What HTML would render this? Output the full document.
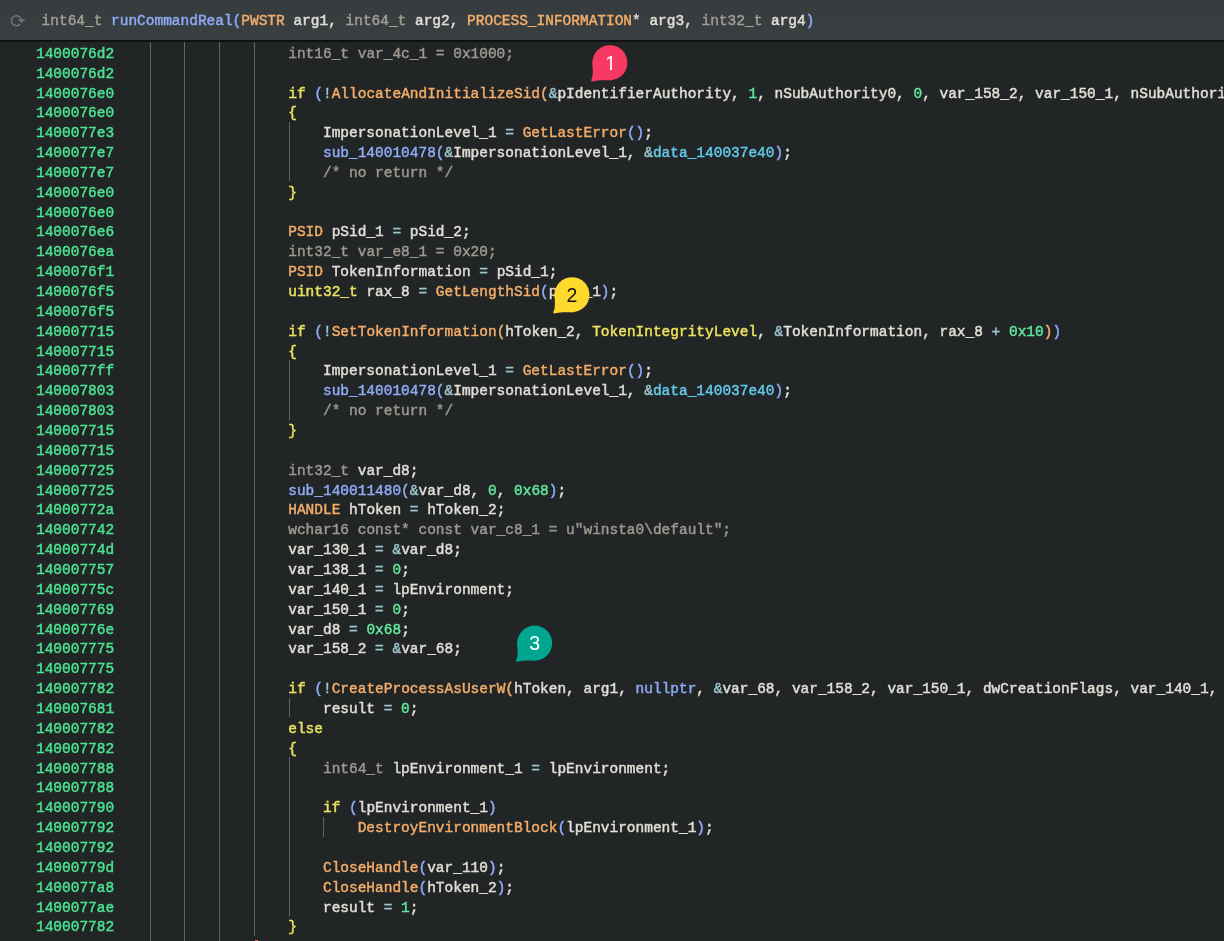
<!DOCTYPE html>
<html lang="en">
<head>
<meta charset="utf-8">
<title>runCommandReal</title>
<style>
html,body{margin:0;padding:0;}
body{width:1224px;height:941px;overflow:hidden;background:#222526;position:relative;
 font-family:"Liberation Mono", monospace;font-size:14.47px;color:#e2ded6;-webkit-text-stroke:0.45px;}
.hdr{position:absolute;left:0;top:0;width:1224px;height:40px;background:linear-gradient(#363c3e,#3a4042);z-index:3;will-change:transform;}
.hline{position:absolute;left:0;top:39.6px;width:1224px;height:2.2px;background:#0e1011;z-index:3;}
.hdr .sig{position:absolute;left:41.6px;top:10.9px;height:20px;line-height:20px;white-space:pre;}
.hdr svg{position:absolute;left:8px;top:12px;}
.code{will-change:transform;position:absolute;left:0;top:42px;width:1224px;height:899px;overflow:hidden;}
.r{position:absolute;left:0;width:1224px;height:19.855px;line-height:19.855px;white-space:pre;}
.a{position:absolute;left:36.0px;top:2.4px;color:#4ae391;}
.c{position:absolute;left:149.3px;top:2.4px;}
.gl{position:absolute;width:1px;background:#606466;}
.d{color:#9e988f;}
.k{color:#ede25d;}
.f{color:#f3ad69;}
.t{color:#f3ad69;}
.s{color:#8fabf6;}
.p{color:#8fabf6;}
.o{color:#9cc6cf;}
.n{color:#5fe79b;}
.g{color:#62c9ea;}
.v{color:#e2ded6;}
.hd{color:#a39d94;}
.bub{position:absolute;z-index:5;}
.bub text{font-family:"Liberation Sans",sans-serif;}
</style>
</head>
<body>
<div class="hdr"><svg width="20" height="18" viewBox="8 12 20 18"><path d="M20.23 24.0A5 5 0 1 1 21.4 20.0" fill="none" stroke="#707475" stroke-width="1.5"/><path d="M17.9 19.5L25.4 19.1L21.7 22.9Z" fill="#707475"/></svg><div class="sig"><span class="hd">int64_t</span><span class="v"> </span><span class="s">runCommandReal(</span><span class="t">PWSTR</span><span class="v"> arg1, </span><span class="hd">int64_t</span><span class="v"> arg2, </span><span class="t">PROCESS_INFORMATION</span><span class="v">* arg3, </span><span class="hd">int32_t</span><span class="v"> arg4</span><span class="s">)</span></div></div>
<div class="hline"></div>
<div class="code">
<div class="gl" style="left:149.70px;top:0.40px;height:913.33px"></div>
<div class="gl" style="left:184.44px;top:0.40px;height:913.33px"></div>
<div class="gl" style="left:219.18px;top:0.40px;height:913.33px"></div>
<div class="gl" style="left:253.92px;top:0.40px;height:893.48px"></div>
<div class="gl" style="left:288.66px;top:79.82px;height:59.56px"></div>
<div class="gl" style="left:288.66px;top:318.08px;height:59.56px"></div>
<div class="gl" style="left:288.66px;top:655.62px;height:19.86px"></div>
<div class="gl" style="left:288.66px;top:715.18px;height:158.84px"></div>
<div class="gl" style="left:323.40px;top:774.75px;height:19.86px"></div>
<div class="r" style="top:0.400px"><span class="a">1400076d2</span><span class="c">                <span class="d">int16_t var_4c_1 = 0x1000;</span></span></div>
<div class="r" style="top:20.255px"><span class="a">1400076d2</span></div>
<div class="r" style="top:40.110px"><span class="a">1400076e0</span><span class="c">                <span class="k">if</span><span class="v"> </span><span class="p">(</span><span class="o">!</span><span class="f">AllocateAndInitializeSid(</span><span class="o">&amp;</span><span class="v">pIdentifierAuthority, </span><span class="n">1</span><span class="v">, nSubAuthority0, </span><span class="n">0</span><span class="v">, var_158_2, var_150_1, nSubAuthority3, nSubAuthority4, nSubAuthority5</span></span></div>
<div class="r" style="top:59.965px"><span class="a">1400076e0</span><span class="c">                <span class="k">{</span></span></div>
<div class="r" style="top:79.820px"><span class="a">1400077e3</span><span class="c">                    <span class="v">ImpersonationLevel_1 </span><span class="o">=</span><span class="v"> </span><span class="f">GetLastError</span><span class="p">()</span><span class="v">;</span></span></div>
<div class="r" style="top:99.675px"><span class="a">1400077e7</span><span class="c">                    <span class="s">sub_140010478</span><span class="p">(</span><span class="o">&amp;</span><span class="v">ImpersonationLevel_1, </span><span class="o">&amp;</span><span class="g">data_140037e40</span><span class="p">)</span><span class="v">;</span></span></div>
<div class="r" style="top:119.530px"><span class="a">1400077e7</span><span class="c">                    <span class="d">/* no return */</span></span></div>
<div class="r" style="top:139.385px"><span class="a">1400076e0</span><span class="c">                <span class="k">}</span></span></div>
<div class="r" style="top:159.240px"><span class="a">1400076e0</span></div>
<div class="r" style="top:179.095px"><span class="a">1400076e6</span><span class="c">                <span class="t">PSID</span><span class="v"> pSid_1 </span><span class="o">=</span><span class="v"> pSid_2;</span></span></div>
<div class="r" style="top:198.950px"><span class="a">1400076ea</span><span class="c">                <span class="d">int32_t var_e8_1 = 0x20;</span></span></div>
<div class="r" style="top:218.805px"><span class="a">1400076f1</span><span class="c">                <span class="t">PSID</span><span class="v"> TokenInformation </span><span class="o">=</span><span class="v"> pSid_1;</span></span></div>
<div class="r" style="top:238.660px"><span class="a">1400076f5</span><span class="c">                <span class="k">uint32_t</span><span class="v"> rax_8 </span><span class="o">=</span><span class="v"> </span><span class="f">GetLengthSid</span><span class="p">(</span><span class="v">pSid_1</span><span class="p">)</span><span class="v">;</span></span></div>
<div class="r" style="top:258.515px"><span class="a">1400076f5</span></div>
<div class="r" style="top:278.370px"><span class="a">140007715</span><span class="c">                <span class="k">if</span><span class="v"> </span><span class="p">(</span><span class="o">!</span><span class="f">SetTokenInformation(</span><span class="v">hToken_2, </span><span class="k">TokenIntegrityLevel</span><span class="v">, </span><span class="o">&amp;</span><span class="v">TokenInformation, rax_8 </span><span class="o">+</span><span class="v"> </span><span class="n">0x10</span><span class="f">)</span><span class="p">)</span></span></div>
<div class="r" style="top:298.225px"><span class="a">140007715</span><span class="c">                <span class="k">{</span></span></div>
<div class="r" style="top:318.080px"><span class="a">1400077ff</span><span class="c">                    <span class="v">ImpersonationLevel_1 </span><span class="o">=</span><span class="v"> </span><span class="f">GetLastError</span><span class="p">()</span><span class="v">;</span></span></div>
<div class="r" style="top:337.935px"><span class="a">140007803</span><span class="c">                    <span class="s">sub_140010478</span><span class="p">(</span><span class="o">&amp;</span><span class="v">ImpersonationLevel_1, </span><span class="o">&amp;</span><span class="g">data_140037e40</span><span class="p">)</span><span class="v">;</span></span></div>
<div class="r" style="top:357.790px"><span class="a">140007803</span><span class="c">                    <span class="d">/* no return */</span></span></div>
<div class="r" style="top:377.645px"><span class="a">140007715</span><span class="c">                <span class="k">}</span></span></div>
<div class="r" style="top:397.500px"><span class="a">140007715</span></div>
<div class="r" style="top:417.355px"><span class="a">140007725</span><span class="c">                <span class="d">int32_t</span><span class="v"> var_d8;</span></span></div>
<div class="r" style="top:437.210px"><span class="a">140007725</span><span class="c">                <span class="s">sub_140011480</span><span class="p">(</span><span class="o">&amp;</span><span class="v">var_d8, </span><span class="n">0</span><span class="v">, </span><span class="n">0x68</span><span class="p">)</span><span class="v">;</span></span></div>
<div class="r" style="top:457.065px"><span class="a">14000772a</span><span class="c">                <span class="t">HANDLE</span><span class="v"> hToken </span><span class="o">=</span><span class="v"> hToken_2;</span></span></div>
<div class="r" style="top:476.920px"><span class="a">140007742</span><span class="c">                <span class="d">wchar16 const* const var_c8_1 = u"winsta0\default";</span></span></div>
<div class="r" style="top:496.775px"><span class="a">14000774d</span><span class="c">                <span class="v">var_130_1 </span><span class="o">=</span><span class="v"> </span><span class="o">&amp;</span><span class="v">var_d8;</span></span></div>
<div class="r" style="top:516.630px"><span class="a">140007757</span><span class="c">                <span class="v">var_138_1 </span><span class="o">=</span><span class="v"> </span><span class="n">0</span><span class="v">;</span></span></div>
<div class="r" style="top:536.485px"><span class="a">14000775c</span><span class="c">                <span class="v">var_140_1 </span><span class="o">=</span><span class="v"> lpEnvironment;</span></span></div>
<div class="r" style="top:556.340px"><span class="a">140007769</span><span class="c">                <span class="v">var_150_1 </span><span class="o">=</span><span class="v"> </span><span class="n">0</span><span class="v">;</span></span></div>
<div class="r" style="top:576.195px"><span class="a">14000776e</span><span class="c">                <span class="v">var_d8 </span><span class="o">=</span><span class="v"> </span><span class="n">0x68</span><span class="v">;</span></span></div>
<div class="r" style="top:596.050px"><span class="a">140007775</span><span class="c">                <span class="v">var_158_2 </span><span class="o">=</span><span class="v"> </span><span class="o">&amp;</span><span class="v">var_68;</span></span></div>
<div class="r" style="top:615.905px"><span class="a">140007775</span></div>
<div class="r" style="top:635.760px"><span class="a">140007782</span><span class="c">                <span class="k">if</span><span class="v"> </span><span class="p">(</span><span class="o">!</span><span class="f">CreateProcessAsUserW(</span><span class="v">hToken, arg1, </span><span class="s">nullptr</span><span class="v">, </span><span class="o">&amp;</span><span class="v">var_68, var_158_2, var_150_1, dwCreationFlags, var_140_1, lpCurrentDirectory, </span><span class="o">&amp;</span><span class="v">var_d8, arg3</span></span></div>
<div class="r" style="top:655.615px"><span class="a">140007681</span><span class="c">                    <span class="v">result </span><span class="o">=</span><span class="v"> </span><span class="n">0</span><span class="v">;</span></span></div>
<div class="r" style="top:675.470px"><span class="a">140007782</span><span class="c">                <span class="k">else</span></span></div>
<div class="r" style="top:695.325px"><span class="a">140007782</span><span class="c">                <span class="k">{</span></span></div>
<div class="r" style="top:715.180px"><span class="a">140007788</span><span class="c">                    <span class="d">int64_t</span><span class="v"> lpEnvironment_1 </span><span class="o">=</span><span class="v"> lpEnvironment;</span></span></div>
<div class="r" style="top:735.035px"><span class="a">140007788</span></div>
<div class="r" style="top:754.890px"><span class="a">140007790</span><span class="c">                    <span class="k">if</span><span class="v"> </span><span class="p">(</span><span class="v">lpEnvironment_1</span><span class="p">)</span></span></div>
<div class="r" style="top:774.745px"><span class="a">140007792</span><span class="c">                        <span class="f">DestroyEnvironmentBlock</span><span class="p">(</span><span class="v">lpEnvironment_1</span><span class="p">)</span><span class="v">;</span></span></div>
<div class="r" style="top:794.600px"><span class="a">140007792</span></div>
<div class="r" style="top:814.455px"><span class="a">14000779d</span><span class="c">                    <span class="f">CloseHandle</span><span class="p">(</span><span class="v">var_110</span><span class="p">)</span><span class="v">;</span></span></div>
<div class="r" style="top:834.310px"><span class="a">1400077a8</span><span class="c">                    <span class="f">CloseHandle</span><span class="p">(</span><span class="v">hToken_2</span><span class="p">)</span><span class="v">;</span></span></div>
<div class="r" style="top:854.165px"><span class="a">1400077ae</span><span class="c">                    <span class="v">result </span><span class="o">=</span><span class="v"> </span><span class="n">1</span><span class="v">;</span></span></div>
<div class="r" style="top:874.020px"><span class="a">140007782</span><span class="c">                <span class="k">}</span></span></div>
</div>
<svg class="bub" style="left:588px;top:43px" width="43" height="41" viewBox="0 0 43 41"><circle cx="21.90" cy="19.70" r="17.5" fill="#f83a63"/><path d="M4.40 17.70 C4.60 25.70 5.70 32.20 3.40 36.60 Q2.50 38.70 4.80 38.40 C8.90 37.00 14.90 37.30 23.90 37.20 Z" fill="#f83a63"/><text x="22.60" y="26.60" font-size="19.5" text-anchor="middle" fill="#ffffff">1</text><rect x="17.75" y="24.79" width="4.24" height="2.48" fill="#f83a63"/><rect x="23.90" y="24.79" width="3.94" height="2.48" fill="#f83a63"/></svg>
<svg class="bub" style="left:550px;top:275px" width="43" height="41" viewBox="0 0 43 41"><circle cx="22.00" cy="19.70" r="17.5" fill="#fdd92c"/><path d="M4.50 17.70 C4.70 25.70 5.80 32.20 3.50 36.60 Q2.60 38.70 4.90 38.40 C9.00 37.00 15.00 37.30 24.00 37.20 Z" fill="#fdd92c"/><text x="22.00" y="26.60" font-size="19.5" text-anchor="middle" fill="#141414">2</text></svg>
<svg class="bub" style="left:513px;top:624px" width="43" height="41" viewBox="0 0 43 41"><circle cx="21.70" cy="19.10" r="17.5" fill="#00a690"/><path d="M4.20 17.10 C4.40 25.10 5.50 31.60 3.20 36.00 Q2.30 38.10 4.60 37.80 C8.70 36.40 14.70 36.70 23.70 36.60 Z" fill="#00a690"/><text x="21.70" y="26.00" font-size="19.5" text-anchor="middle" fill="#ffffff">3</text></svg>
<div style="position:absolute;left:255px;top:940px;width:3px;height:1px;background:#d85a55"></div>
</body>
</html>
